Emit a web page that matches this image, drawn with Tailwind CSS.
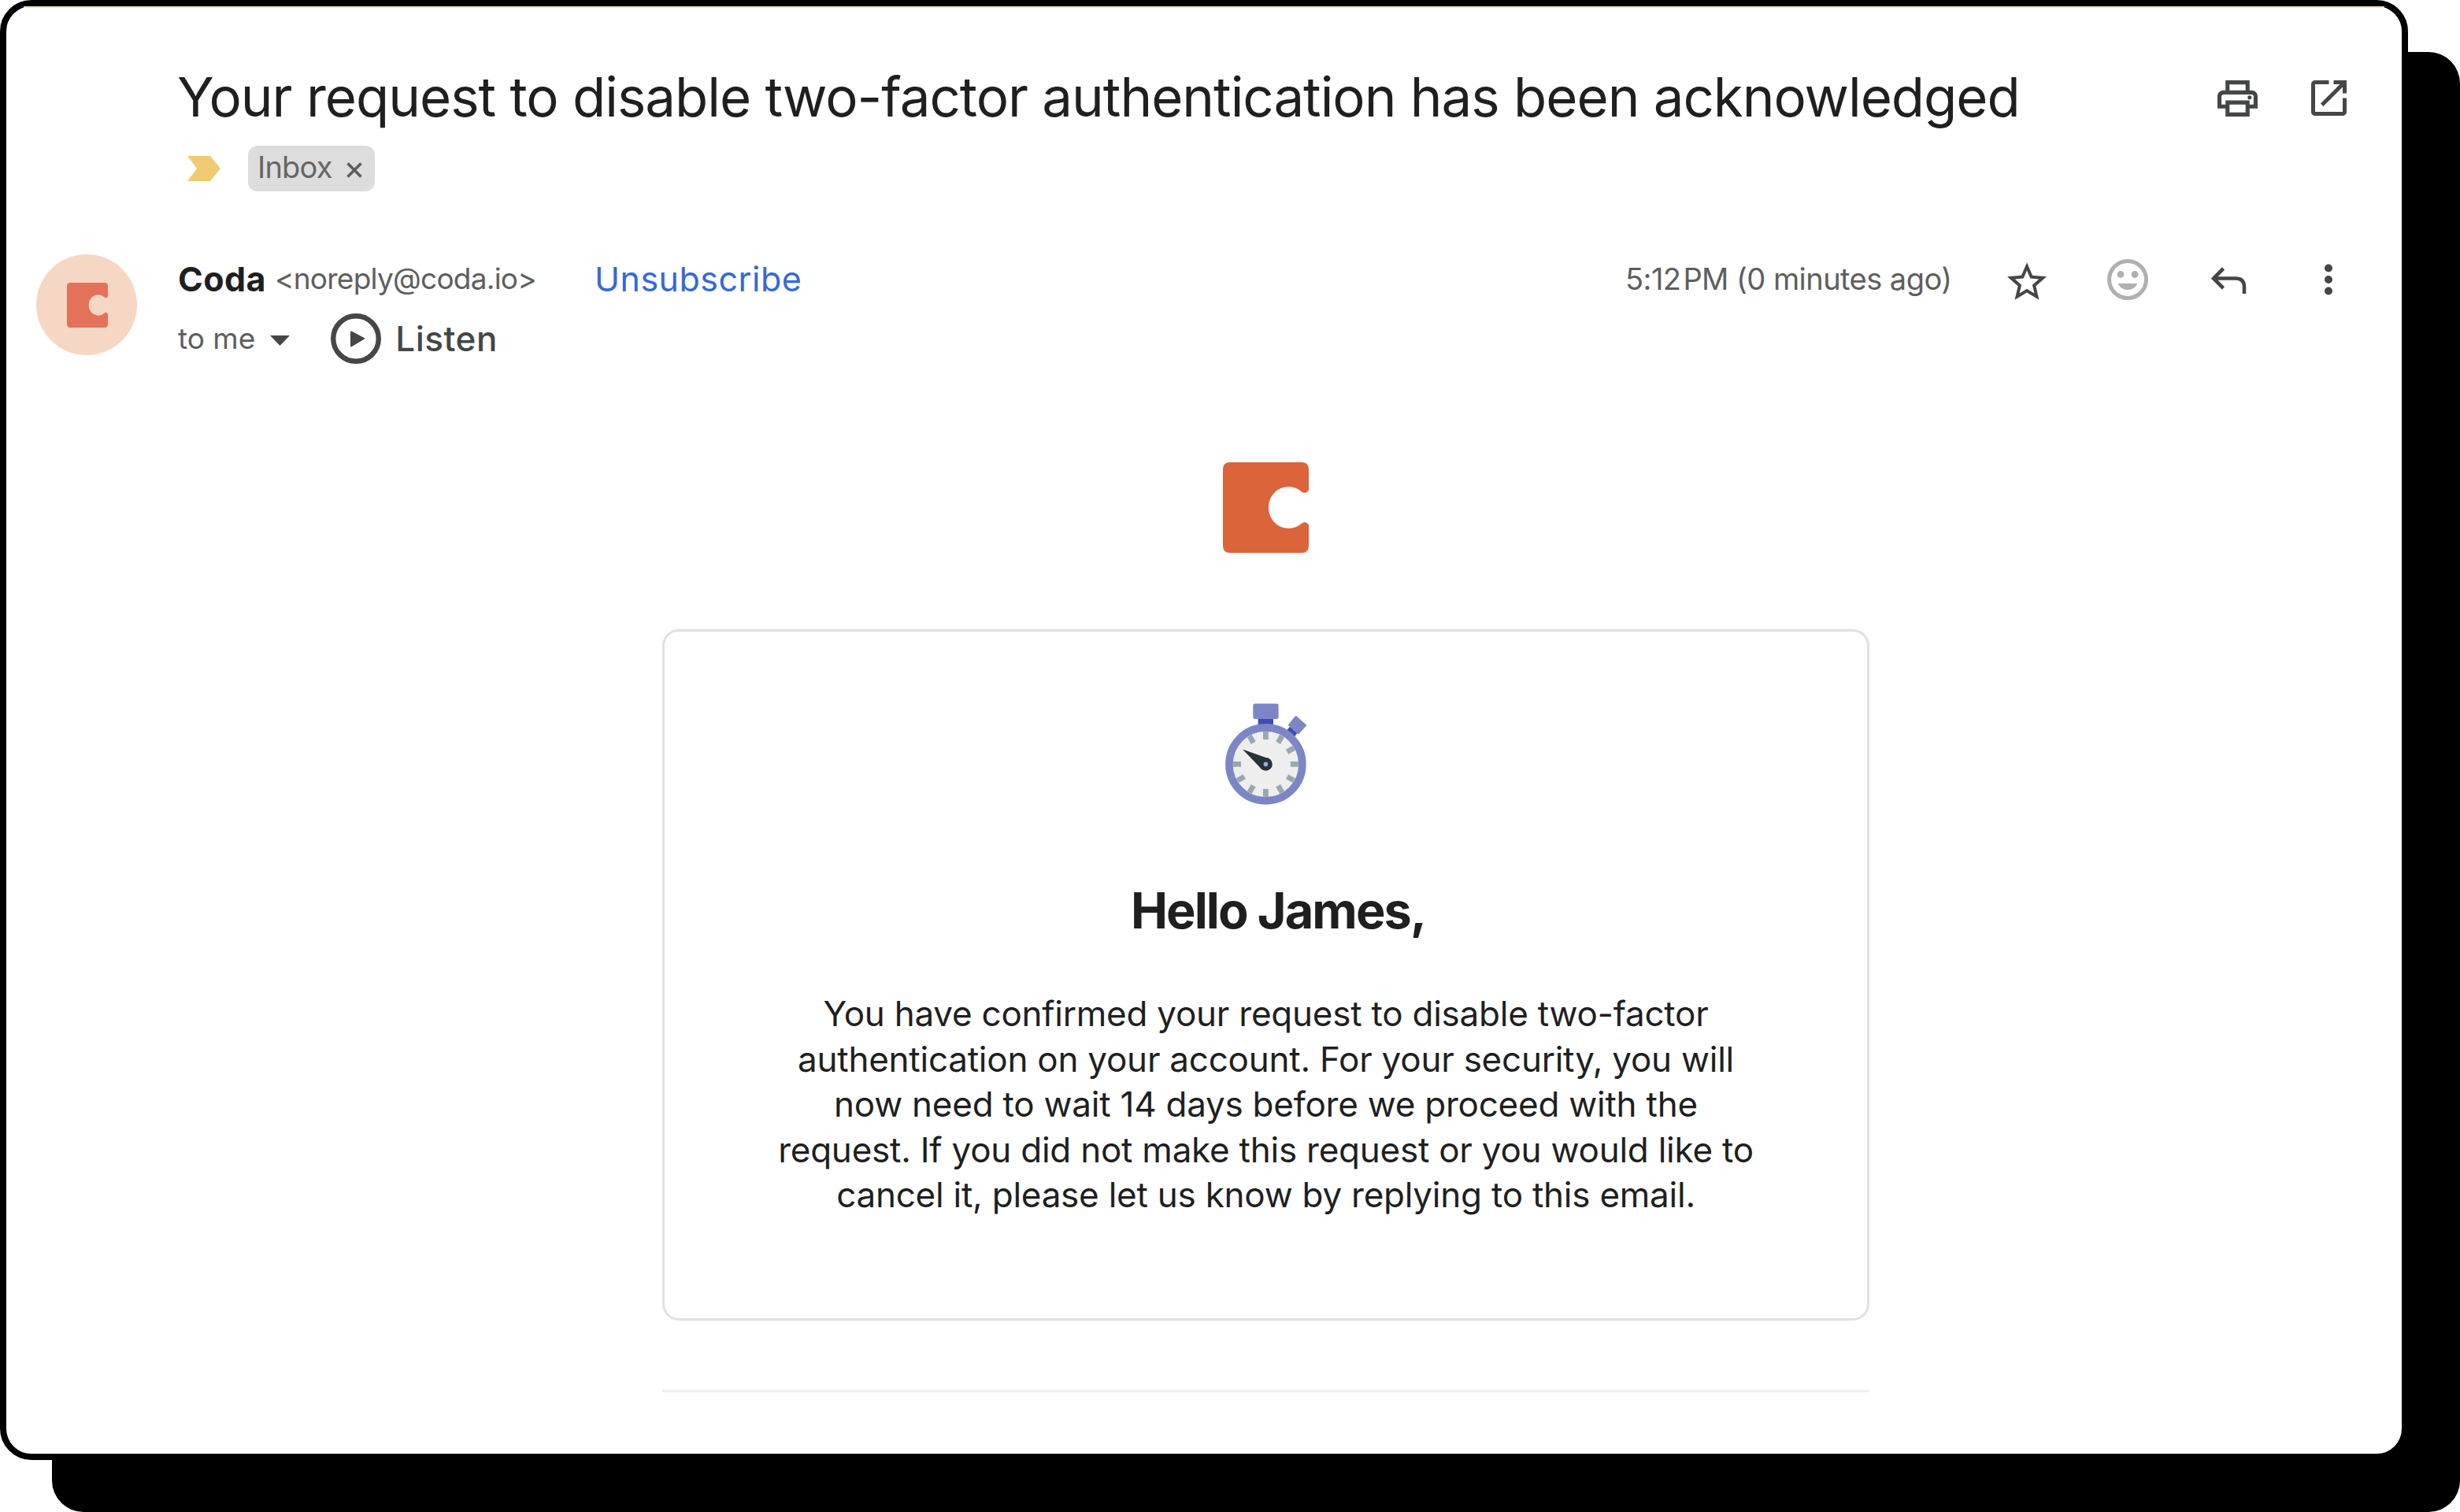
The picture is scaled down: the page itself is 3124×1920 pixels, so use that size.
<!DOCTYPE html>
<html lang="en">
<head>
    <meta charset="UTF-8">
    <meta name="viewport" content="width=device-width, initial-scale=1.0">
    <title>Your request to disable two-factor authentication has been acknowledged</title>
    <script src="https://cdn.jsdelivr.net/npm/@tailwindcss/browser@4"></script>
</head>
<body class="w-[3124px] h-[1920px] bg-white font-['Inter',sans-serif] text-[#1f1f1f] overflow-hidden">
    <div class="w-[3058px] h-[1854px] bg-white border-8 border-black rounded-[40px] shadow-[66px_66px_0_0_#000]">
        <div class="h-0.5 mx-[22px] bg-[#fbdcc0]"></div>

        <!-- Subject -->
        <div class="flex items-center h-20 mt-[72px] pl-[217px] pr-[70px]">
            <h1 class="flex-1 pt-0.5 text-[69px] leading-[80px] tracking-[-1.03px] whitespace-nowrap">Your request to disable two-factor authentication has been acknowledged</h1>
            <div class="flex items-center gap-[68px] mt-[5px] text-[#444746]">
                <svg class="w-[51px] h-[46px]" viewBox="2 3 20 18" fill="currentColor">
                    <path d="M19 8h-1V3H6v5H5c-1.66 0-3 1.34-3 3v6h4v4h12v-4h4v-6c0-1.66-1.34-3-3-3zM8 5h8v3H8V5zm8 14H8v-4h8v4zm2-4v-2H6v2H4v-4c0-.55.45-1 1-1h14c.55 0 1 .45 1 1v4h-2z"/>
                    <circle cx="18" cy="11.5" r="1"/>
                </svg>
                <svg class="w-[45px] h-[45px]" viewBox="3 3 18 18" fill="currentColor">
                    <path d="M19 19H5V5h7V3H5c-1.11 0-2 .9-2 2v14c0 1.1.89 2 2 2h14c1.1 0 2-.9 2-2v-7h-2v7zM14.400 3v2h3.190l-9.830 9.830 1.410 1.410L19 6.410V9.600h2V3h-6.600z"/>
                </svg>
            </div>
        </div>

        <!-- Labels -->
        <div class="flex items-center mt-[23px] pl-[230px]">
            <svg class="w-[42px] h-8" viewBox="0 0 42 32"><path d="M0 0h29l13 16-13 16H0l12-16z" fill="#f0cb74"/></svg>
            <div class="flex items-center w-[161px] h-[58px] ml-[35px] pl-3 rounded-xl bg-[#ddd] text-[#666] text-[38px] leading-[54px] tracking-[-0.8px]">
                <span class="-mt-1">Inbox</span>
                <svg class="w-5 h-5 ml-[18px] mt-1" viewBox="0 0 20 20" stroke="#5c5c5c" stroke-width="3.6"><path d="M1.5 1.5l17 17M18.5 1.5l-17 17"/></svg>
            </div>
        </div>

        <!-- Sender -->
        <div class="flex mt-20 pl-[38px]">
            <div class="flex items-center justify-center w-32 h-32 rounded-full bg-[#f6d7c4]">
                <svg class="w-[52px] h-[57px] ml-0.5" viewBox="0 0 109 115" preserveAspectRatio="none" fill="#e4725b">
                    <path d="M9 0h91q9 0 9 9v26q-3 6-9 2.5Q93 31 84 31C69 31 58 43 58 57.5S69 84 84 84q9 0 16-6.5 6-3.5 9 2.5v26q0 9-9 9H9q-9 0-9-9V9q0-9 9-9z"/>
                </svg>
            </div>
            <div class="flex-1 ml-[52px] pt-[3px]">
                <div class="flex h-14 leading-[56px] whitespace-nowrap">
                    <span class="text-[43px] font-bold w-[123px] tracking-[0.4px]">Coda</span>
                    <span class="text-[37px] tracking-[-0.75px] text-[#5e5e5e] w-[406px]">&lt;noreply@coda.io&gt;</span>
                    <a href="#" class="text-[43px] tracking-[0.5px] text-[#3569d7]">Unsubscribe</a>
                </div>
                <div class="flex items-center h-16 mt-4 leading-[64px]">
                    <span class="text-[37px] text-[#5e5e5e]">to me</span>
                    <svg class="w-[25px] h-[13px] ml-[19px] mt-1" viewBox="0 0 25 13"><path d="M0 0h25L12.5 13z" fill="#444746"/></svg>
                    <svg class="w-16 h-16 ml-[52px]" viewBox="0 0 64 64">
                        <circle cx="32" cy="32" r="28.8" fill="none" stroke="#444746" stroke-width="6.4"/>
                        <path d="M26 23.5L42 32 26 41.5z" fill="#444746" stroke="#444746" stroke-width="2" stroke-linejoin="round"/>
                    </svg>
                    <span class="ml-[18px] text-[44px] tracking-[0.5px] font-medium text-[#444746]">Listen</span>
                </div>
            </div>
            <div class="flex items-center h-[60px] pr-[88px] text-[#444746]">
                <span class="w-[485px] text-[38px] tracking-[-0.55px] text-[#5e5e5e] whitespace-nowrap mt-[3px]">5:12&#8202;PM (0 minutes ago)</span>
                <svg class="w-[50px] h-[48px] mt-2" viewBox="2 2 20 19" fill="currentColor">
                    <path d="M22 9.24l-7.19-.62L12 2 9.19 8.63 2 9.24l5.46 4.73L5.82 21 12 17.27 18.18 21l-1.63-7.03L22 9.24zM12 15.4l-3.76 2.27 1-4.28-3.32-2.88 4.38-.38L12 6.1l1.71 4.04 4.38.38-3.32 2.88 1 4.28L12 15.4z"/>
                </svg>
                <svg class="w-[52px] h-[52px] ml-[77px] mt-1" viewBox="0 0 52 52" fill="#b0b0b0">
                    <circle cx="26" cy="26" r="23.5" fill="none" stroke="#b0b0b0" stroke-width="5"/>
                    <circle cx="17" cy="19.5" r="4.4"/>
                    <circle cx="35" cy="19.5" r="4.4"/>
                    <path d="M13.5 31h25C36 36 31.5 39 26 39s-10-3-12.5-8z"/>
                </svg>
                <svg class="w-[45px] h-[35px] ml-20 mt-[6px]" viewBox="0 0 45 35" fill="none" stroke="currentColor" stroke-width="4.6">
                    <path d="M3 14.5h28q11 0 11 11V34M15.5 2L3 14.5 15.5 27"/>
                </svg>
                <svg class="w-[10px] h-[40px] ml-[99px] mt-1" viewBox="0 0 10 40" fill="currentColor">
                    <circle cx="5" cy="5.5" r="5"/>
                    <circle cx="5" cy="20" r="5"/>
                    <circle cx="5" cy="34.5" r="5"/>
                </svg>
            </div>
        </div>

        <!-- Message body -->
        <div class="w-[1533px] ml-[833px] mt-[125px] flex flex-col items-center">
            <svg class="w-[109px] h-[115px]" viewBox="0 0 109 115" fill="#dc643b">
                <path d="M9 0h91q9 0 9 9v26q-3 6-9 2.5Q93 31 84 31C69 31 58 43 58 57.5S69 84 84 84q9 0 16-6.5 6-3.5 9 2.5v26q0 9-9 9H9q-9 0-9-9V9q0-9 9-9z"/>
            </svg>

            <div class="w-full h-[878px] mt-[97px] border-3 border-[#e0e0e0] rounded-[21px] flex flex-col items-center pt-[90px]">
                <svg class="w-[104px] h-[131px]" viewBox="36 22 104 131">
                    <path d="M77.7 42h19.3v12H77.7zM114.300 57l4-4.600 9 8.600-3.400 4.700z" fill="#3f4cab"/>
                    <rect x="71.3" y="23.5" width="32.3" height="19.5" rx="2.5" fill="#7c86c6"/>
                    <path d="M125.7 40l12.300 11-9.300 10.300-11.700-10.600z" fill="#7c86c6" stroke="#7c86c6" stroke-width="2" stroke-linejoin="round"/>
                    <circle cx="87.4" cy="100.4" r="46.5" fill="#eee" stroke="#7c86c6" stroke-width="9.6"/>
                    <g stroke="#9aa8ae" stroke-width="6.8">
                        <path d="M87.4 59v10"/>
                        <path d="M87.4 59v10" transform="rotate(30 87.4 100.4)"/>
                        <path d="M87.4 59v10" transform="rotate(60 87.4 100.4)"/>
                        <path d="M87.4 59v10" transform="rotate(90 87.4 100.4)"/>
                        <path d="M87.4 59v10" transform="rotate(120 87.4 100.4)"/>
                        <path d="M87.4 59v10" transform="rotate(150 87.4 100.4)"/>
                        <path d="M87.4 59v10" transform="rotate(180 87.4 100.4)"/>
                        <path d="M87.4 59v10" transform="rotate(210 87.4 100.4)"/>
                        <path d="M87.4 59v10" transform="rotate(240 87.4 100.4)"/>
                        <path d="M87.4 59v10" transform="rotate(270 87.4 100.4)"/>
                        <path d="M87.4 59v10" transform="rotate(330 87.4 100.4)"/>
                    </g>
                    <path d="M58 81.5L88 92.2 80.5 105z" fill="#263238"/>
                    <circle cx="87.4" cy="100.4" r="8.4" fill="#263238"/>
                    <circle cx="87.4" cy="100.4" r="2.8" fill="#9fa8da"/>
                </svg>
                <h2 class="mt-[93px] ml-[31px] text-[63px] leading-[80px] font-bold tracking-[-1.9px]">Hello James,</h2>
                <p class="mt-[63px] text-[44px] leading-[57.5px] tracking-[-0.24px] text-center whitespace-nowrap">
                    You have confirmed your request to disable two-factor<br>
                    authentication on your account. For your security, you will<br>
                    now need to wait 14 days before we proceed with the<br>
                    request. If you did not make this request or you would like to<br>
                    cancel it, please let us know by replying to this email.
                </p>
            </div>

            <div class="w-full h-[3px] mt-[88px] bg-[#efefef]"></div>
        </div>
    </div>
</body>
</html>
